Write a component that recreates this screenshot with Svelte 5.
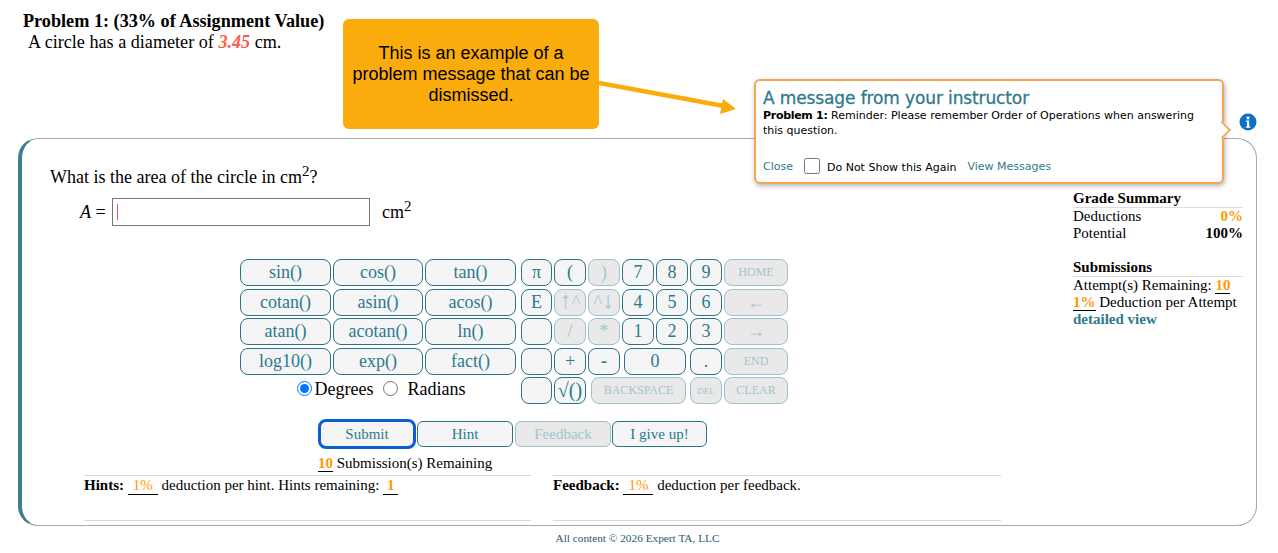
<script lang="ts">
  type Key = { label?: string; tall?: string; post?: string; off?: boolean; small?: boolean };

  const fnKeys = [
    "sin()", "cos()", "tan()",
    "cotan()", "asin()", "acos()",
    "atan()", "acotan()", "ln()",
    "log10()", "exp()", "fact()"
  ];

  const opKeys: Key[] = [
    { label: "π" }, { label: "(" }, { label: ")", off: true },
    { label: "7" }, { label: "8" }, { label: "9" }, { label: "HOME", off: true, small: true },
    { label: "E" }, { tall: "↑", post: "^", off: true }, { label: "^", tall: "↓", off: true },
    { label: "4" }, { label: "5" }, { label: "6" }, { label: "←", off: true },
    { label: "" }, { label: "/", off: true }, { label: "*", off: true },
    { label: "1" }, { label: "2" }, { label: "3" }, { label: "→", off: true }
  ];
</script>

<div class="page">
  <div class="problem">
    <div class="title">Problem 1: (33% of Assignment Value)</div>
    <div class="statement">A circle has a diameter of <em>3.45</em> cm.</div>
  </div>

  <section class="card">
    <div class="work">
      <p class="question">What is the area of the circle in cm<sup>2</sup>?</p>
      <div class="answer">
        <span class="var"><i>A</i> =</span>
        <div class="field"><span class="caret"></span></div>
        <span class="unit">cm<sup>2</sup></span>
      </div>

      <div class="keypad">
        <div class="fn-col">
          <div class="fn-grid">
            {#each fnKeys as k}
              <button class="key">{k}</button>
            {/each}
          </div>
          <div class="modes">
            <label><input type="radio" name="angle" checked />Degrees</label>
            <label class="rad"><input type="radio" name="angle" /><span>Radians</span></label>
          </div>
        </div>

        <div class="ops">
          {#each opKeys as k}
            <button class="key" class:off={k.off} class:small={k.small}>{k.label ?? ""}{#if k.tall}<span class="tall">{k.tall}</span>{/if}{k.post ?? ""}</button>
          {/each}
          <div class="row4">
            <button class="key"></button>
            <button class="key">+</button>
            <button class="key"><b>-</b></button>
            <button class="key zero">0</button>
            <button class="key">.</button>
            <button class="key off small">END</button>
          </div>
          <div class="row5">
            <button class="key"></button>
            <button class="key sqrt">√()</button>
            <button class="key off small back">BACKSPACE</button>
            <button class="key off del">DEL</button>
            <button class="key off small">CLEAR</button>
          </div>
        </div>
      </div>

      <div class="actions">
        <button class="act focus">Submit</button>
        <button class="act">Hint</button>
        <button class="act off">Feedback</button>
        <button class="act">I give up!</button>
      </div>
      <div class="remaining"><span class="num">10</span> Submission(s) Remaining</div>

      <div class="notes">
        <div class="note">
          <b>Hints:</b> <span class="num pad">1%</span> deduction per hint. Hints remaining: <span class="num tiny">1</span>
        </div>
        <div class="note">
          <b>Feedback:</b> <span class="num pad">1%</span> deduction per feedback.
        </div>
      </div>
    </div>

    <aside class="side">
      <h4>Grade Summary</h4>
      <div class="line"><span>Deductions</span><b class="orange">0%</b></div>
      <div class="line"><span>Potential</span><b>100%</b></div>
      <h4 class="second">Submissions</h4>
      <div>Attempt(s) Remaining: <span class="num">10</span></div>
      <div><span class="num">1%</span> Deduction per Attempt</div>
      <a href="#detail" class="detail">detailed view</a>
    </aside>
  </section>

  <footer>All content © 2026 Expert TA, LLC</footer>

  <div class="callout">This is an example of a problem message that can be dismissed.</div>

  <svg class="arrow" width="150" height="40" viewBox="0 0 150 40">
    <path d="M0 3 L125 26" stroke="#f9ac0b" stroke-width="4.5" fill="none" />
    <path d="M124 19 L137 29 L121 34 Z" fill="#f9ac0b" />
  </svg>

  <div class="popup">
    <h3>A message from your instructor</h3>
    <p><b>Problem 1:</b> Reminder: Please remember Order of Operations when answering this question.</p>
    <div class="popup-foot">
      <a href="#close">Close</a>
      <label><input type="checkbox" />Do Not Show this Again</label>
      <a href="#messages">View Messages</a>
    </div>
  </div>

  <svg class="info" width="18" height="18" viewBox="0 0 18 18">
    <circle cx="9" cy="9" r="8.5" fill="#0a6fc9" />
    <circle cx="9" cy="4.8" r="1.6" fill="#fff" />
    <path d="M6.8 7.4h3.4v6h1.2v1.4H6.8v-1.4H8v-4.6H6.8z" fill="#fff" />
  </svg>
</div>

<style>
  :global(body) {
    margin: 0;
    background: #fff;
  }

  .page {
    position: relative;
    width: 1278px;
    height: 553px;
    overflow: hidden;
    font-family: "Liberation Serif", "Times New Roman", serif;
    font-size: 15px;
    color: #000;
  }

  .problem {
    height: 138px;
    padding: 12px 0 0 23px;
    box-sizing: border-box;
  }

  .title {
    font-size: 18.2px;
    font-weight: bold;
    line-height: 19px;
  }

  .statement {
    font-size: 18.15px;
    line-height: 22px;
    padding-left: 5px;
  }

  .statement em {
    color: #ff5a4a;
    font-weight: bold;
  }

  .card {
    margin-left: 18px;
    width: 1239px;
    height: 388px;
    box-sizing: border-box;
    border: 1px solid #a9a9a9;
    border-left: 4px solid #3d7f8e;
    border-radius: 20px;
    display: flex;
  }

  .work {
    width: 1051px;
    flex: none;
  }

  .question {
    margin: 28px 0 0 28px;
    font-size: 18px;
    line-height: 20px;
  }

  sup {
    font-size: 15px;
    line-height: 0;
  }

  .answer {
    display: flex;
    align-items: center;
    margin: 11px 0 0 58px;
    font-size: 18px;
  }

  .var {
    width: 32px;
  }

  .field {
    width: 258px;
    height: 28px;
    box-sizing: border-box;
    border: 1px solid #767676;
    display: flex;
    align-items: center;
    padding-left: 4px;
  }

  .caret {
    width: 1px;
    height: 16px;
    background: #e55;
  }

  .unit {
    margin-left: 12px;
  }

  .keypad {
    display: flex;
    gap: 5px;
    margin: 33px 0 0 218px;
  }

  .fn-col {
    width: 276px;
  }

  .fn-grid {
    display: grid;
    grid-template-columns: 91px 90px 91px;
    grid-auto-rows: 27px;
    column-gap: 2px;
    row-gap: 2.5px;
  }

  .key {
    box-sizing: border-box;
    padding: 0;
    background: #f5f5f5;
    border: 1px solid #2b7387;
    border-radius: 8px;
    color: #2b7a90;
    font-family: inherit;
    font-size: 18px;
  }

  .key.off,
  .act.off {
    background: #e9e9e9;
    border-color: #9fc0c9;
    color: #a3c3cf;
  }

  .key.small {
    font-size: 12px;
  }

  .tall {
    font-size: 24px;
    line-height: 0;
  }

  .modes {
    display: flex;
    justify-content: center;
    gap: 10px;
    margin-top: 3px;
    padding-left: 6px;
    font-size: 18px;
    line-height: 22px;
  }

  .modes input {
    margin: 0 3px 0 0;
    width: 15px;
    height: 15px;
    vertical-align: -1px;
  }

  .rad span {
    margin-left: 6px;
  }

  .ops {
    display: grid;
    grid-template-columns: 31px repeat(5, 32px) 64px;
    grid-auto-rows: 27px;
    column-gap: 2px;
    row-gap: 2.5px;
    width: 267px;
  }

  .row4,
  .row5 {
    grid-column: 1 / -1;
    display: grid;
    column-gap: 2px;
  }

  .row4 {
    grid-template-columns: 31px 32px 32px 66px 32px 64px;
  }

  .row4 .zero {
    margin: 0 2px;
  }

  .row5 {
    grid-template-columns: 31px 32px 100px 32px 64px;
  }

  .row5 .back {
    margin: 0 2px 0 3px;
  }

  .row5 .del {
    font-size: 9px;
  }

  .sqrt {
    font-size: 20px;
  }

  .actions {
    display: flex;
    align-items: center;
    margin: 15px 0 0 296px;
    gap: 1px;
  }

  .act {
    box-sizing: border-box;
    width: 96px;
    height: 26px;
    padding: 0;
    background: #f5f5f5;
    border: 1px solid #2b7387;
    border-radius: 6px;
    color: #2b7a90;
    font-family: inherit;
    font-size: 15px;
  }

  .act.off {
    margin-left: 1px;
  }

  .act:last-child {
    width: 95px;
  }

  .act.focus {
    width: 98px;
    height: 30px;
    border: 3px solid #0a5fd0;
    border-radius: 8px;
  }

  .remaining {
    margin: 5px 0 0 296px;
    line-height: 18px;
  }

  .num {
    color: #f90;
    font-weight: bold;
    border-bottom: 1px solid #000;
  }

  .num.pad {
    display: inline-block;
    width: 30px;
    text-align: center;
    font-weight: normal;
    line-height: 17px;
  }

  .num.tiny {
    display: inline-block;
    width: 15px;
    text-align: center;
    line-height: 17px;
  }

  .notes {
    display: flex;
    gap: 22px;
    margin: 3px 0 0 62px;
  }

  .note {
    width: 448px;
    height: 46px;
    box-sizing: border-box;
    border-top: 1px solid #d8d8d8;
    border-bottom: 1px solid #d8d8d8;
    line-height: 18px;
  }

  .note:first-child {
    width: 447px;
  }

  .side {
    width: 170px;
    margin: 51px 0 0 0;
    line-height: 17px;
  }

  .side h4 {
    margin: 0;
    font-size: 15px;
    line-height: 17px;
    border-bottom: 1px solid #ddd;
  }

  .side h4.second {
    margin-top: 17px;
  }

  .line {
    display: flex;
    justify-content: space-between;
  }

  .orange {
    color: #f90;
  }

  .detail {
    color: #2f7a8c;
    font-weight: bold;
    text-decoration: none;
  }

  footer {
    text-align: center;
    font-size: 11.3px;
    line-height: 14px;
    margin-top: 5px;
    padding-right: 3px;
    color: #2a5a70;
  }

  .callout {
    position: absolute;
    left: 343px;
    top: 19px;
    width: 256px;
    height: 110px;
    box-sizing: border-box;
    padding: 24px 8px 0;
    background: #f9ac0b;
    border-radius: 6px;
    font-family: "Liberation Sans", Arial, sans-serif;
    font-size: 18px;
    line-height: 21px;
    text-align: center;
  }

  .arrow {
    position: absolute;
    left: 599px;
    top: 80px;
  }

  .popup {
    position: absolute;
    left: 754px;
    top: 79px;
    width: 470px;
    height: 105px;
    box-sizing: border-box;
    padding: 7px 7px;
    background: #fff;
    border: 2px solid #f3a656;
    border-radius: 6px;
    box-shadow: 1px 2px 5px rgba(0, 0, 0, 0.3);
    font-family: "DejaVu Sans", Verdana, sans-serif;
    font-size: 11px;
  }

  .popup::after {
    content: "";
    position: absolute;
    right: -7px;
    top: 42px;
    width: 12px;
    height: 12px;
    background: #fff;
    border-top: 2px solid #f3a656;
    border-right: 2px solid #f3a656;
    transform: rotate(45deg) scale(0.9);
  }

  .popup h3 {
    margin: 0;
    font-size: 17px;
    line-height: 20px;
    font-weight: normal;
    letter-spacing: -0.12px;
    -webkit-text-stroke: 0.3px #2f7a8c;
    color: #2f7a8c;
  }

  .popup p {
    margin: 0;
    line-height: 15px;
  }

  .popup p b {
    letter-spacing: -0.3px;
  }

  .popup-foot {
    display: flex;
    align-items: center;
    gap: 11px;
    margin-top: 20px;
  }

  .popup-foot a {
    color: #2f7a8c;
    text-decoration: none;
  }

  .popup-foot input {
    width: 16px;
    height: 16px;
    margin: 0 7px 0 0;
    vertical-align: -3px;
  }

  .info {
    position: absolute;
    left: 1239px;
    top: 113px;
  }
</style>
